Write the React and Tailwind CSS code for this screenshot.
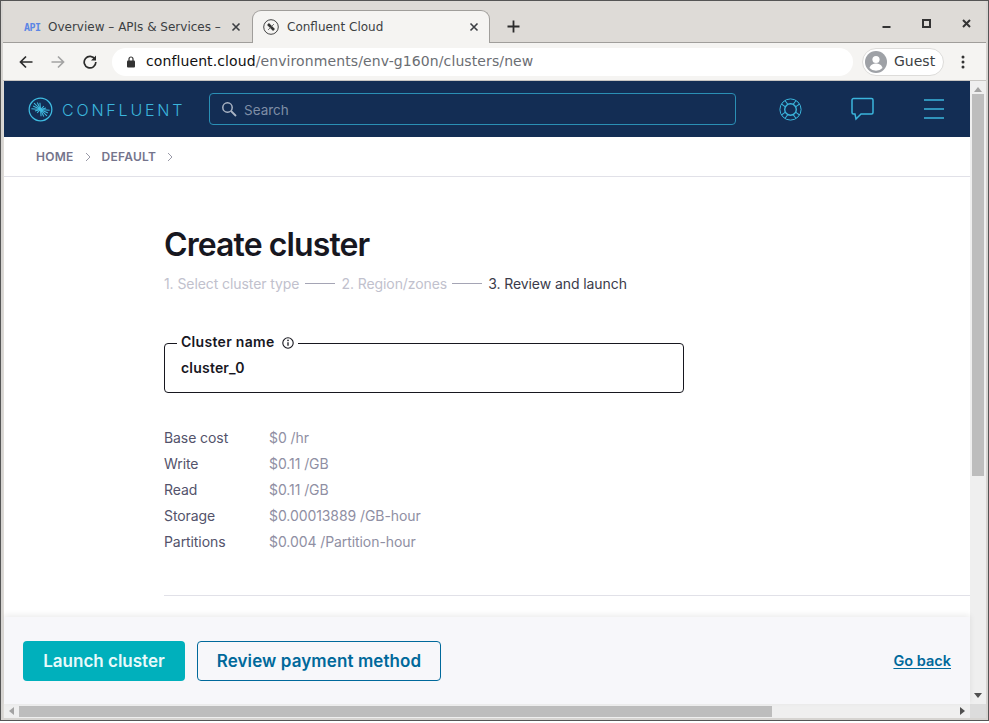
const ui = { fontFamily: '"DejaVu Sans", sans-serif' };
const inter = { fontFamily: 'Inter, sans-serif' };

function Logo({ size = 25, color = '#3fbce2' }) {
  const rays = [];
  const fans = [
    [-175, 9.5], [-155, 8.5], [-135, 9.5], [-115, 8], [-95, 7],
    [5, 9.5], [25, 8.5], [45, 9.5], [65, 8], [85, 7],
    [-45, 5], [-15, 6], [135, 5], [165, 6],
  ];
  fans.forEach(([a, L], i) => {
    const r = (a * Math.PI) / 180;
    rays.push(<line key={i} x1="13" y1="13" x2={13 + Math.cos(r) * L} y2={13 + Math.sin(r) * L} stroke={color} strokeWidth="1.1" />);
  });
  return (
    <svg width={size} height={size} viewBox="0 0 26 26" fill="none">
      <circle cx="13" cy="13" r="11.8" stroke={color} strokeWidth="1.3" />
      {rays}
    </svg>
  );
}

function Lifebuoy() {
  const c = '#3bb5dc';
  return (
    <svg width="23" height="23" viewBox="0 0 23 23" fill="none" stroke={c} strokeWidth="1">
      <circle cx="11.5" cy="11.5" r="10.6" />
      <circle cx="11.5" cy="11.5" r="5.8" strokeWidth="1.4" />
      {[45, 135, 225, 315].map((a) => (
        <g key={a} transform={`rotate(${a} 11.5 11.500)`}>
          <path d="M9.800 6L9 1.200M13.200 6L14 1.200" />
        </g>
      ))}
    </svg>
  );
}

function Row({ label, value, unit }) {
  return (
    <div className="flex h-[26px] items-center text-[14px] tracking-[-0.08px]">
      <div className="w-[105px] text-[#53536b]">{label}</div>
      <div className="text-[#8f8fa3]">{value} {unit}</div>
    </div>
  );
}

export default function App() {
  return (
    <div className="h-[723px] w-[989px] bg-white pb-[2px]">
      <div className="h-full border border-[#555] bg-[#d6d4d1] px-[2px] pb-[2px]">
        <div className="flex h-full flex-col overflow-hidden bg-[#dedbd7]" style={ui}>
          {/* tab strip */}
          <div className="flex h-[42px] shrink-0 items-end border-b border-[#a09e9b] pl-[9px]">
            <div className="-mb-[1px] flex h-[32px] w-[240px] items-center pl-[12px] text-[12px] text-[#3c3f43]">
              <span className="w-[16px] text-[10px] font-bold tracking-[-0.5px] text-[#5b86e5]" style={{ fontFamily: '"DejaVu Sans Mono", monospace' }}>API</span>
              <span className="ml-[8px] w-[172px] whitespace-nowrap">Overview – APIs &amp; Services –</span>
              <svg className="ml-[11px]" width="10" height="10" viewBox="0 0 10 10"><path d="M1.500 1.500l7 7M8.500 1.500l-7 7" stroke="#3c3f43" strokeWidth="1.600" /></svg>
            </div>
            <div className="relative -mb-[1px] flex h-[33px] w-[238px] items-center rounded-t-[9px] border border-b-0 border-[#a09e9b] bg-[#f5f4f2] pb-[1px] pl-[10px] text-[12px] text-[#3c3f43]">
              <svg width="16" height="16" viewBox="0 0 16 16" fill="none"><circle cx="8" cy="8" r="7.300" stroke="#444" strokeWidth="1" /><path d="M5 5l6 6" stroke="#333" strokeWidth="2.600" /><path d="M11 5l-6 6" stroke="#555" strokeWidth="0.800" /></svg>
              <span className="ml-[8px]">Confluent Cloud</span>
              <svg className="absolute right-[10px]" width="10" height="10" viewBox="0 0 10 10"><path d="M1.500 1.500l7 7M8.500 1.500l-7 7" stroke="#3c3f43" strokeWidth="1.600" /></svg>
            </div>
            <svg className="mb-[9px] ml-[17px]" width="13" height="13" viewBox="0 0 13 13"><path d="M6.500 0.500v12M0.500 6.500h12" stroke="#2b2b2b" strokeWidth="1.800" /></svg>
            <div className="mb-[14px] ml-auto flex items-center gap-[31px] pr-[15px]">
              <svg width="9" height="9" viewBox="0 0 9 9"><path d="M0.500 8h8" stroke="#333" strokeWidth="2" /></svg>
              <svg width="9" height="9" viewBox="0 0 9 9"><rect x="1" y="1" width="7" height="7" fill="none" stroke="#333" strokeWidth="2" /></svg>
              <svg width="9" height="9" viewBox="0 0 9 9"><path d="M1 1l7 7M8 1l-7 7" stroke="#333" strokeWidth="2" /></svg>
            </div>
          </div>
          {/* toolbar */}
          <div className="flex h-[38px] shrink-0 items-center border-b border-[#c8c6c3] bg-[#f5f4f2]">
            <svg className="ml-[16px]" width="14" height="14" viewBox="0 0 14 14" fill="none"><path d="M13.500 7H1.500M7 1.500L1.500 7L7 12.500" stroke="#2b2b2b" strokeWidth="1.700" /></svg>
            <svg className="ml-[18px]" width="14" height="14" viewBox="0 0 14 14" fill="none"><path d="M0.500 7H12.500M7 1.500L12.500 7L7 12.500" stroke="#a3a3a3" strokeWidth="1.700" /></svg>
            <svg className="ml-[18px]" width="14" height="14" viewBox="0 0 14 14" fill="none"><path d="M12 4.200A5.800 5.800 0 1 0 12.800 7" stroke="#2b2b2b" strokeWidth="1.700" /><path d="M13 0.500v5h-5z" fill="#2b2b2b" /></svg>
            <div className="ml-[15px] flex h-[28px] w-[741px] items-center rounded-full bg-white pl-[14px] text-[14px] tracking-[0.1px]">
              <svg width="10" height="12" viewBox="0 0 10 12"><rect x="1" y="4.500" width="8" height="7" rx="1" fill="#333" /><path d="M3 5V3a2 2 0 0 1 4 0v2" fill="none" stroke="#333" strokeWidth="1.200" /></svg>
              <span className="ml-[10px] text-[#111]">confluent.cloud</span><span className="text-[#6b6e73]">/environments/env-g160n/clusters/new</span>
            </div>
            <div className="ml-[9px] flex h-[28px] w-[82px] items-center rounded-full border border-[#dddcda] bg-white pl-[2px] text-[14px] text-[#3c3f43]">
              <svg width="22" height="22" viewBox="0 0 22 22"><circle cx="11" cy="11" r="11" fill="#9ea1a6" /><circle cx="11" cy="8.500" r="3.600" fill="#fff" /><path d="M4.500 17c1-3.500 4-4.500 6.500-4.500s5.500 1 6.500 4.500a9 9 0 0 1-13 0z" fill="#fff" /></svg>
              <span className="ml-[7px]">Guest</span>
            </div>
            <svg className="ml-[17px]" width="4" height="14" viewBox="0 0 4 14"><circle cx="2" cy="2" r="1.500" fill="#333" /><circle cx="2" cy="7" r="1.500" fill="#333" /><circle cx="2" cy="12" r="1.500" fill="#333" /></svg>
          </div>
          {/* viewport */}
          <div className="flex min-h-0 flex-1 flex-col" style={inter}>
            <div className="flex min-h-0 flex-1">
              <div className="relative ml-[1px] flex min-w-0 flex-1 flex-col bg-white">
                <header className="flex h-[56px] shrink-0 items-center bg-[#132d54] pl-[24px]">
                  <Logo />
                  <span className="ml-[9px] w-[121px] whitespace-nowrap pt-[1px] text-[16px] font-light tracking-[2.800px] text-[#3bb5dc]">CONFLUENT</span>
                  <div className="ml-[26px] flex h-[32px] w-[527px] items-center rounded-[4px] border border-[#2a8fb5] pl-[11px] text-[13.500px] text-[#7f8ea6]">
                    <svg width="16" height="16" viewBox="0 0 16 16" fill="none"><circle cx="6.500" cy="6.500" r="4.700" stroke="#aab4c4" strokeWidth="1.500" /><path d="M10 10l5 5" stroke="#aab4c4" strokeWidth="1.800" /></svg>
                    <span className="ml-[7px] mt-[2px]">Search</span>
                  </div>
                  <div className="ml-[43px]"><Lifebuoy /></div>
                  <svg className="ml-[49px]" width="24" height="24" viewBox="0 0 24 24" fill="none"><path d="M2.500 1.500h18a1.500 1.500 0 0 1 1.500 1.500v12.500a1.500 1.500 0 0 1-1.500 1.500H10l-5 5-1-5H2.500a1.500 1.500 0 0 1-1.500-1.500V3a1.500 1.500 0 0 1 1.500-1.500z" stroke="#3bb5dc" strokeWidth="1.500" /></svg>
                  <svg className="ml-[49px]" width="20" height="20" viewBox="0 0 20 20"><path d="M0 1h20M0 10h20M0 19h20" stroke="#3bb5dc" strokeWidth="1.400" /></svg>
                </header>
                <nav className="flex h-[40px] shrink-0 items-center border-b border-[#e1e1e8] pl-[32px] text-[12px] font-semibold tracking-[0.25px] text-[#74748c]">
                  <span>HOME</span>
                  <svg className="mx-[11px]" width="6" height="10" viewBox="0 0 6 10" fill="none"><path d="M1 1l4 4-4 4" stroke="#9a9aa8" strokeWidth="1" /></svg>
                  <span>DEFAULT</span>
                  <svg className="ml-[11px]" width="6" height="10" viewBox="0 0 6 10" fill="none"><path d="M1 1l4 4-4 4" stroke="#9a9aa8" strokeWidth="1" /></svg>
                </nav>
                <main className="min-h-0 flex-1 overflow-hidden pl-[160px]">
                  <h1 className="mt-[48px] text-[32px] leading-[40px] font-semibold tracking-[-0.900px] text-[#17171f]">Create cluster</h1>
                  <div className="mt-[8px] flex h-[20px] items-center text-[14px] tracking-[-0.08px] text-[#c1c1cd]">
                    <span>1. Select cluster type</span>
                    <span className="mx-[6px] h-px w-[30px] bg-[#a5a5b5]" />
                    <span>2. Region/zones</span>
                    <span className="ml-[5px] mr-[6px] h-px w-[30px] bg-[#a5a5b5]" />
                    <span className="text-[#3b3b4a]">3. Review and launch</span>
                  </div>
                  <fieldset className="mt-[42px] h-[58px] w-[520px] rounded-[4px] border border-[#17171f] pl-[12px]">
                    <legend className="flex h-[16px] items-center px-[4px] text-[14px] font-semibold tracking-[0.3px] text-[#17171f]">
                      <span className="mb-[4px]">Cluster name</span>
                      <svg className="ml-[7px]" width="12" height="12" viewBox="0 0 12 12" fill="none"><circle cx="6" cy="6" r="5.200" stroke="#17171f" strokeWidth="1.100" /><path d="M6 5.200v3.500" stroke="#17171f" strokeWidth="1.300" /><circle cx="6" cy="3.400" r="0.800" fill="#17171f" /></svg>
                    </legend>
                    <div className="ml-[4px] mt-[8px] text-[14px] leading-[18px] font-semibold tracking-[0.2px] text-[#17171f]">cluster_0</div>
                  </fieldset>
                  <div className="mt-[31px]">
                    <Row label="Base cost" value="$0" unit="/hr" />
                    <Row label="Write" value="$0.11" unit="/GB" />
                    <Row label="Read" value="$0.11" unit="/GB" />
                    <Row label="Storage" value="$0.00013889" unit="/GB-hour" />
                    <Row label="Partitions" value="$0.004" unit="/Partition-hour" />
                  </div>
                  <div className="mt-[41px] h-px bg-[#e1e1e8]" />
                </main>
                <footer className="flex h-[87px] shrink-0 items-center bg-[#f7f7fa] px-[19px] shadow-[0_-2px_6px_rgba(0,0,0,0.08)]">
                  <button className="h-[40px] w-[162px] rounded-[4px] bg-[#00b0bc] pt-[2px] text-[17px] font-semibold text-[#e8fafb]">Launch cluster</button>
                  <button className="ml-[12px] h-[40px] w-[244px] rounded-[4px] border border-[#00699b] pt-[2px] text-[17px] font-semibold tracking-[0.1px] text-[#00699b]">Review payment method</button>
                  <a className="ml-auto text-[14.500px] font-semibold text-[#00699b] underline underline-offset-2">Go back</a>
                </footer>
              </div>
              {/* vertical scrollbar */}
              <div className="flex w-[16px] shrink-0 flex-col items-center bg-[#efefef]">
                <div className="mt-[6px] h-0 w-0 border-x-[4px] border-b-[5px] border-x-transparent border-b-[#a3a3a3]" />
                <div className="mt-[2px] h-[382px] w-[12px] bg-[#bdbdbd]" />
                <div className="mb-[6px] mt-auto h-0 w-0 border-x-[4px] border-t-[5px] border-x-transparent border-t-[#505050]" />
              </div>
            </div>
            {/* horizontal scrollbar */}
            <div className="ml-[1px] flex h-[14px] shrink-0 items-center bg-[#efefef]">
              <div className="ml-[5px] h-0 w-0 border-y-[4px] border-r-[5px] border-y-transparent border-r-[#a3a3a3]" />
              <div className="ml-[5px] h-[11px] w-[753px] bg-[#bdbdbd]" />
              <div className="ml-auto mr-[5px] h-0 w-0 border-y-[4px] border-l-[5px] border-y-transparent border-l-[#505050]" />
              <div className="h-[14px] w-[16px] bg-[#dcdcdc]" />
            </div>
          </div>
        </div>
      </div>
    </div>
  );
}
